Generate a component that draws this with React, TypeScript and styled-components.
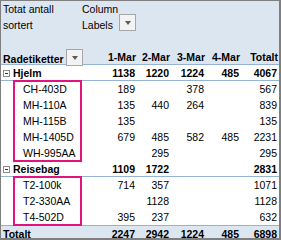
import React from 'react';
import styled, { createGlobalStyle } from 'styled-components';

const GlobalStyle = createGlobalStyle`
  html, body {
    margin: 0;
    padding: 0;
    background: #ffffff;
  }
  body {
    font-family: "Liberation Sans", Arial, sans-serif;
    font-size: 10.5px;
    color: #000000;
  }
`

const Sheet = styled.div`
  width: 281px;
  height: 240px;
  box-sizing: border-box;
  border-top: 1px solid #7f7f7f;
  border-left: 1px solid #7f7f7f;
  border-right: 2px solid #7f7f7f;
  border-bottom: 2px solid #7f7f7f;
  overflow: hidden;
`

const cols = '81px 55px 34px 35px 35px 38px';

const Head = styled.div`
  background: #dce6f1;
`

const TitleRow = styled.div`
  display: grid;
  grid-template-columns: ${cols};
  height: 32px;
`

const TitleCell = styled.div<{ $pad: number }>`
  display: flex;
  justify-content: space-between;
  align-items: flex-end;
  padding-left: ${p => p.$pad}px;
  line-height: 16px;
`

const Blank = styled.div`
  height: 16px;
`

const Row = styled.div<{ $bold?: boolean; $line?: boolean; $total?: boolean }>`
  display: grid;
  grid-template-columns: ${cols};
  height: 16px;
  box-sizing: border-box;
  line-height: 16px;
  font-weight: ${p => (p.$bold ? 700 : 400)};
  border-bottom: ${p => (p.$line ? '1px solid #95b3d7' : 'none')};
  background: ${p => (p.$total ? '#dce6f1' : 'transparent')};
  border-top: ${p => (p.$total ? '1px solid #95b3d7' : 'none')};
`

const HeaderRow = styled(Row)`
  border-bottom: 1px solid #95b3d7;
`

const Label = styled.div<{ $indent: number }>`
  display: flex;
  align-items: center;
  padding-left: ${p => p.$indent}px;
  white-space: nowrap;
`

const Num = styled.div`
  text-align: right;
  padding-right: 2px;
  white-space: nowrap;
`

const HeadNum = styled(Num)`
  padding-right: 1px;
  overflow: visible;
`

const Collapse = styled.span`
  display: inline-flex;
  align-items: center;
  justify-content: center;
  width: 7px;
  height: 7px;
  box-sizing: border-box;
  border: 1px solid #8c8c8c;
  background: #ffffff;
  margin-right: 3px;
  &::after {
    content: '';
    width: 3px;
    height: 1px;
    background: #333333;
  }
`

const FilterButton = styled.span<{ $lift: number }>`
  display: inline-flex;
  align-items: center;
  justify-content: center;
  width: 17px;
  height: 17px;
  box-sizing: border-box;
  border: 1px solid #a6a6a6;
  background: #f3f3f3;
  margin-bottom: ${p => p.$lift}px;
  margin-right: 1px;
  flex: none;
  &::after {
    content: '';
    border-left: 3.5px solid transparent;
    border-right: 3.5px solid transparent;
    border-top: 4px solid #5a5a5a;
  }
`

const LabelHead = styled.div`
  display: flex;
  justify-content: space-between;
  align-items: flex-end;
  padding-left: 2px;
  margin-right: -2px;
`

const Group = styled.div`
  position: relative;
`

const Highlight = styled.div`
  position: absolute;
  left: 12px;
  top: -1px;
  bottom: -1px;
  width: 69px;
  box-sizing: border-box;
  border: 2px solid #e2137e;
  pointer-events: none;
`

type Line = [string, ...(number | null)[]];

const groups: { name: string; values: (number | null)[]; items: Line[] }[] = [
  {
    name: 'Hjelm',
    values: [1138, 1220, 1224, 485, 4067],
    items: [
      ['CH-403D', 189, null, 378, null, 567],
      ['MH-110A', 135, 440, 264, null, 839],
      ['MH-115B', 135, null, null, null, 135],
      ['MH-1405D', 679, 485, 582, 485, 2231],
      ['WH-995AA', null, 295, null, null, 295],
    ],
  },
  {
    name: 'Reisebag',
    values: [1109, 1722, null, null, 2831],
    items: [
      ['T2-100k', 714, 357, null, null, 1071],
      ['T2-330AA', null, 1128, null, null, 1128],
      ['T4-502D', 395, 237, null, null, 632],
    ],
  },
];

const totals = [2247, 2942, 1224, 485, 6898];
const headers = ['1-Mar', '2-Mar', '3-Mar', '4-Mar', 'Totalt'];

const Values = ({ values }: { values: (number | null)[] }) => (
  <>
    {values.map((v, i) => (
      <Num key={i}>{v ?? ''}</Num>
    ))}
  </>
);

export default function App() {
  return (
    <>
      <GlobalStyle />
      <Sheet>
        <Head>
          <TitleRow>
            <TitleCell $pad={2}>Totat antall<br />sortert</TitleCell>
            <TitleCell $pad={0}>
              <span>Column<br />Labels</span>
              <FilterButton $lift={2} />
            </TitleCell>
          </TitleRow>
          <Blank />
          <HeaderRow $bold>
            <LabelHead>
              <span>Radetiketter</span>
              <FilterButton $lift={1} />
            </LabelHead>
            {headers.map(h => (
              <HeadNum key={h}>{h}</HeadNum>
            ))}
          </HeaderRow>
        </Head>
        {groups.map(g => (
          <React.Fragment key={g.name}>
            <Row $bold $line>
              <Label $indent={2}>
                <Collapse />
                {g.name}
              </Label>
              <Values values={g.values} />
            </Row>
            <Group>
              {g.items.map(([name, ...vals]) => (
                <Row key={name}>
                  <Label $indent={22}>{name}</Label>
                  <Values values={vals} />
                </Row>
              ))}
              <Highlight />
            </Group>
          </React.Fragment>
        ))}
        <Row $bold $total>
          <Label $indent={2}>Totalt</Label>
          <Values values={totals} />
        </Row>
      </Sheet>
    </>
  );
}
